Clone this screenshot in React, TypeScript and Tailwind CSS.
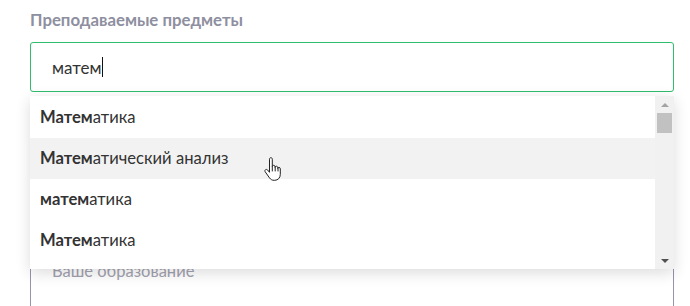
import React from "react";

const options = [
  { bold: "Матем", rest: "атика", hover: false },
  { bold: "Матем", rest: "атический анализ", hover: true },
  { bold: "матем", rest: "атика", hover: false },
  { bold: "Матем", rest: "атика", hover: false },
];

function HandCursor() {
  return (
    <svg width="18" height="24" viewBox="0 0 18 24" className="absolute left-[264px] top-[157px]">
      <path
        d="M5.5 2.2c0-.9.6-1.5 1.4-1.5s1.4.6 1.4 1.5v7.3c.2-.8.7-1.2 1.4-1.2.8 0 1.3.6 1.3 1.4v.6c.2-.7.7-1.1 1.4-1.1.8 0 1.3.6 1.3 1.4v.8c.2-.6.7-1 1.3-1 .8 0 1.3.6 1.3 1.4v5.6c0 3.4-2.3 5.9-5.6 5.9H10c-2 0-3.3-.8-4.5-2.4L1.2 14.8c-.5-.7-.4-1.6.3-2.1.7-.5 1.6-.3 2.1.3l1.9 2.3V2.2z"
        fill="#fff"
        stroke="#222"
        strokeWidth="1"
        strokeLinejoin="round"
      />
      <path d="M8.3 9.6v4.4M11.2 10.3v3.7M14 11.2v2.8" stroke="#222" strokeWidth="1" strokeLinecap="round" />
    </svg>
  );
}

export default function App() {
  return (
    <div className="relative w-[690px] h-[306px] overflow-hidden bg-white font-['Lato','Noto_Sans',sans-serif]">
      <div className="px-[30px] pt-[10px]">
        {/* Label */}
        <div className="text-[16.8px] font-bold leading-[20px] text-[#8e8fa0]">Преподаваемые предметы</div>

        {/* Search input */}
        <div className="mt-[12px] h-[50px] w-[644px] rounded-[3px] border border-[#2fbd6e] flex items-center pl-[21px]">
          <span className="text-[17px] text-[#333] leading-none">матем</span>
          <span className="ml-[1px] h-[20px] w-[1px] bg-[#111]" />
        </div>

        {/* Education textarea (partly covered) */}
        <div className="mt-[160px] h-[80px] w-[644px] rounded-[3px] border border-[#9893ad] pl-[21px] pt-[6px]">
          <span className="text-[16.5px] text-[#a3a2b0]">Ваше образование</span>
        </div>
      </div>

      {/* Dropdown */}
      <div className="absolute left-[30px] top-[96px] w-[644px] h-[173px] flex bg-white shadow-[0_4px_14px_rgba(0,0,0,0.14)]">
        <ul className="flex-1">
          {options.map((o, i) => (
            <li
              key={i}
              className={`flex items-center pl-[10px] text-[16.6px] text-[#333] ${o.hover ? "bg-[#f2f2f2]" : ""} ${i === 0 ? "h-[42px]" : "h-[41px]"}`}
            >
              <span className="font-bold">{o.bold}</span>
              <span>{o.rest}</span>
            </li>
          ))}
        </ul>
        {/* Scrollbar */}
        <div className="w-[19px] bg-[#f1f1f1] flex flex-col items-center">
          <div className="h-[17px] flex items-center justify-center">
            <div className="w-0 h-0 border-x-[4px] border-x-transparent border-b-[4px] border-b-[#a3a3a3]" />
          </div>
          <div className="w-[15px] h-[20px] bg-[#c1c1c1]" />
          <div className="flex-1" />
          <div className="h-[17px] flex items-center justify-center">
            <div className="w-0 h-0 border-x-[4px] border-x-transparent border-t-[4px] border-t-[#505050]" />
          </div>
        </div>
      </div>

      <HandCursor />
    </div>
  );
}
